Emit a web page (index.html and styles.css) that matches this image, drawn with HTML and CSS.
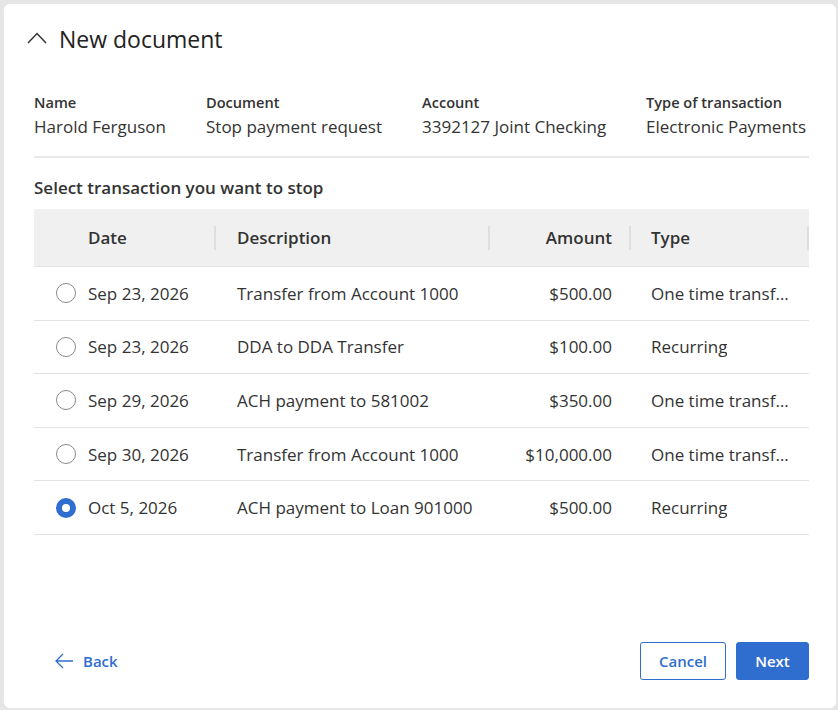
FILE: index.html
```html
<!DOCTYPE html>
<html>
<head>
    <title>New document</title>
    <link rel="stylesheet" href="styles.css">
</head>
<body>
    <div class="card">
        <div class="card-header">
            <svg class="chevron" width="20" height="12" viewBox="0 0 20 12">
                <path d="M1 11 L10 1.5 L19 11" fill="none" stroke="#333" stroke-width="1.5"/>
            </svg>
            <h1 class="title">New document</h1>
        </div>

        <!-- summary of the request -->
        <div class="summary">
            <div class="field field-name">
                <div class="field-label">Name</div>
                <div class="field-value">Harold Ferguson</div>
            </div>
            <div class="field field-doc">
                <div class="field-label">Document</div>
                <div class="field-value">Stop payment request</div>
            </div>
            <div class="field field-account">
                <div class="field-label">Account</div>
                <div class="field-value">3392127 Joint Checking</div>
            </div>
            <div class="field">
                <div class="field-label">Type of transaction</div>
                <div class="field-value">Electronic Payments</div>
            </div>
        </div>

        <h2 class="section-title">Select transaction you want to stop</h2>

        <div class="grid">
            <div class="row head">
                <div class="cell pick"></div>
                <div class="cell date sep">Date</div>
                <div class="cell desc sep">Description</div>
                <div class="cell amount sep">Amount</div>
                <div class="cell type sep">Type</div>
            </div>
            <label class="row">
                <div class="cell pick"><input type="radio" name="txn"></div>
                <div class="cell date">Sep 23, 2026</div>
                <div class="cell desc">Transfer from Account 1000</div>
                <div class="cell amount">$500.00</div>
                <div class="cell type"><span class="clip">One time transfer</span></div>
            </label>
            <label class="row">
                <div class="cell pick"><input type="radio" name="txn"></div>
                <div class="cell date">Sep 23, 2026</div>
                <div class="cell desc">DDA to DDA Transfer</div>
                <div class="cell amount">$100.00</div>
                <div class="cell type"><span class="clip">Recurring</span></div>
            </label>
            <label class="row">
                <div class="cell pick"><input type="radio" name="txn"></div>
                <div class="cell date">Sep 29, 2026</div>
                <div class="cell desc">ACH payment to 581002</div>
                <div class="cell amount">$350.00</div>
                <div class="cell type"><span class="clip">One time transfer</span></div>
            </label>
            <label class="row">
                <div class="cell pick"><input type="radio" name="txn"></div>
                <div class="cell date">Sep 30, 2026</div>
                <div class="cell desc">Transfer from Account 1000</div>
                <div class="cell amount">$10,000.00</div>
                <div class="cell type"><span class="clip">One time transfer</span></div>
            </label>
            <label class="row">
                <div class="cell pick"><input type="radio" name="txn" checked></div>
                <div class="cell date">Oct 5, 2026</div>
                <div class="cell desc">ACH payment to Loan 901000</div>
                <div class="cell amount">$500.00</div>
                <div class="cell type"><span class="clip">Recurring</span></div>
            </label>
        </div>

        <div class="footer">
            <a class="back" href="#">
                <svg width="20" height="16" viewBox="0 0 20 16">
                    <path d="M19 8 H2 M9 1 L2 8 L9 15" fill="none" stroke="#2f6dcf" stroke-width="1.3"/>
                </svg>
                Back
            </a>
            <div class="actions">
                <button class="btn btn-outline">Cancel</button>
                <button class="btn btn-primary">Next</button>
            </div>
        </div>
    </div>
</body>
</html>
```

FILE: styles.css
```css
body {
    margin: 0;
    padding: 4px 2px 2px 4px;
    background-color: #e6e6e6;
    font-family: 'Open Sans', 'Noto Sans', sans-serif;
    color: #333;
}

.card {
    display: flex;
    flex-direction: column;
    height: 704px;
    box-sizing: border-box;
    padding: 0 27px 0 30px;
    background: white;
    border-radius: 6px;
}

.card-header {
    display: flex;
    align-items: center;
    gap: 12px;
    margin-left: -7px;
    padding-top: 20px;
    height: 30px;
}

.chevron {
    display: block;
    margin-top: -2px;
}

.title {
    margin: 0;
    font-size: 23px;
    font-weight: 500;
    line-height: 30px;
    color: #222;
}

/* Summary fields */
.summary {
    display: flex;
    margin-top: 38px;
    padding-bottom: 17px;
    border-bottom: 2px solid #e8e8e8;
}

.field-name { width: 172px; }
.field-doc { width: 216px; }
.field-account { width: 224px; }

.field-label {
    font-size: 14.6px;
    font-weight: 600;
    line-height: 20px;
}

.field-value {
    margin-top: 3px;
    font-size: 17px;
    line-height: 24px;
}

.section-title {
    margin: 18px 0 9px;
    font-size: 17px;
    font-weight: 600;
    line-height: 24px;
}

/* Transactions */
.row {
    display: grid;
    grid-template-columns: 44px 138px 274px 141px 178px;
    height: 53.6px;
    border-bottom: 1px solid #e2e2e2;
    box-sizing: border-box;
    font-size: 17px;
    cursor: pointer;
}

.row.head {
    height: 58px;
    background: #f0f0f0;
    font-weight: 600;
    cursor: default;
}

.cell {
    display: flex;
    align-items: center;
    position: relative;
    min-width: 0;
}

.pick { padding-left: 22px; }
.date { padding-left: 10px; }
.desc { padding-left: 21px; }
.amount { justify-content: flex-end; padding-right: 19px; }
.type { padding-left: 20px; }

.sep::after {
    content: "";
    position: absolute;
    right: 0;
    top: 17px;
    width: 2px;
    height: 24px;
    background: #dedede;
}

.clip {
    max-width: 139px;
    white-space: nowrap;
    overflow: hidden;
    text-overflow: ellipsis;
}

input[type="radio"] {
    appearance: none;
    margin: 0;
    width: 20px;
    height: 20px;
    border: 1.5px solid #8a8a8a;
    border-radius: 50%;
    box-sizing: border-box;
    background: white;
}

input[type="radio"]:checked {
    border: 6.5px solid #2f6dcf;
}

/* Footer */
.footer {
    display: flex;
    justify-content: space-between;
    align-items: center;
    margin-top: auto;
    padding: 0 0 28px 20px;
}

.back {
    display: flex;
    align-items: center;
    gap: 9px;
    color: #2f6dcf;
    text-decoration: none;
    font-size: 15px;
    font-weight: 600;
}

.actions {
    display: flex;
    gap: 10px;
}

.btn {
    height: 38px;
    border-radius: 3px;
    font-family: 'Open Sans', sans-serif;
    font-size: 15px;
    font-weight: 600;
    cursor: pointer;
}

.btn-outline {
    width: 86px;
    background: white;
    border: 1px solid #2f6dcf;
    color: #2f6dcf;
}

.btn-primary {
    width: 73px;
    background: #2f6dcf;
    border: 1px solid #2f6dcf;
    color: white;
}
```
